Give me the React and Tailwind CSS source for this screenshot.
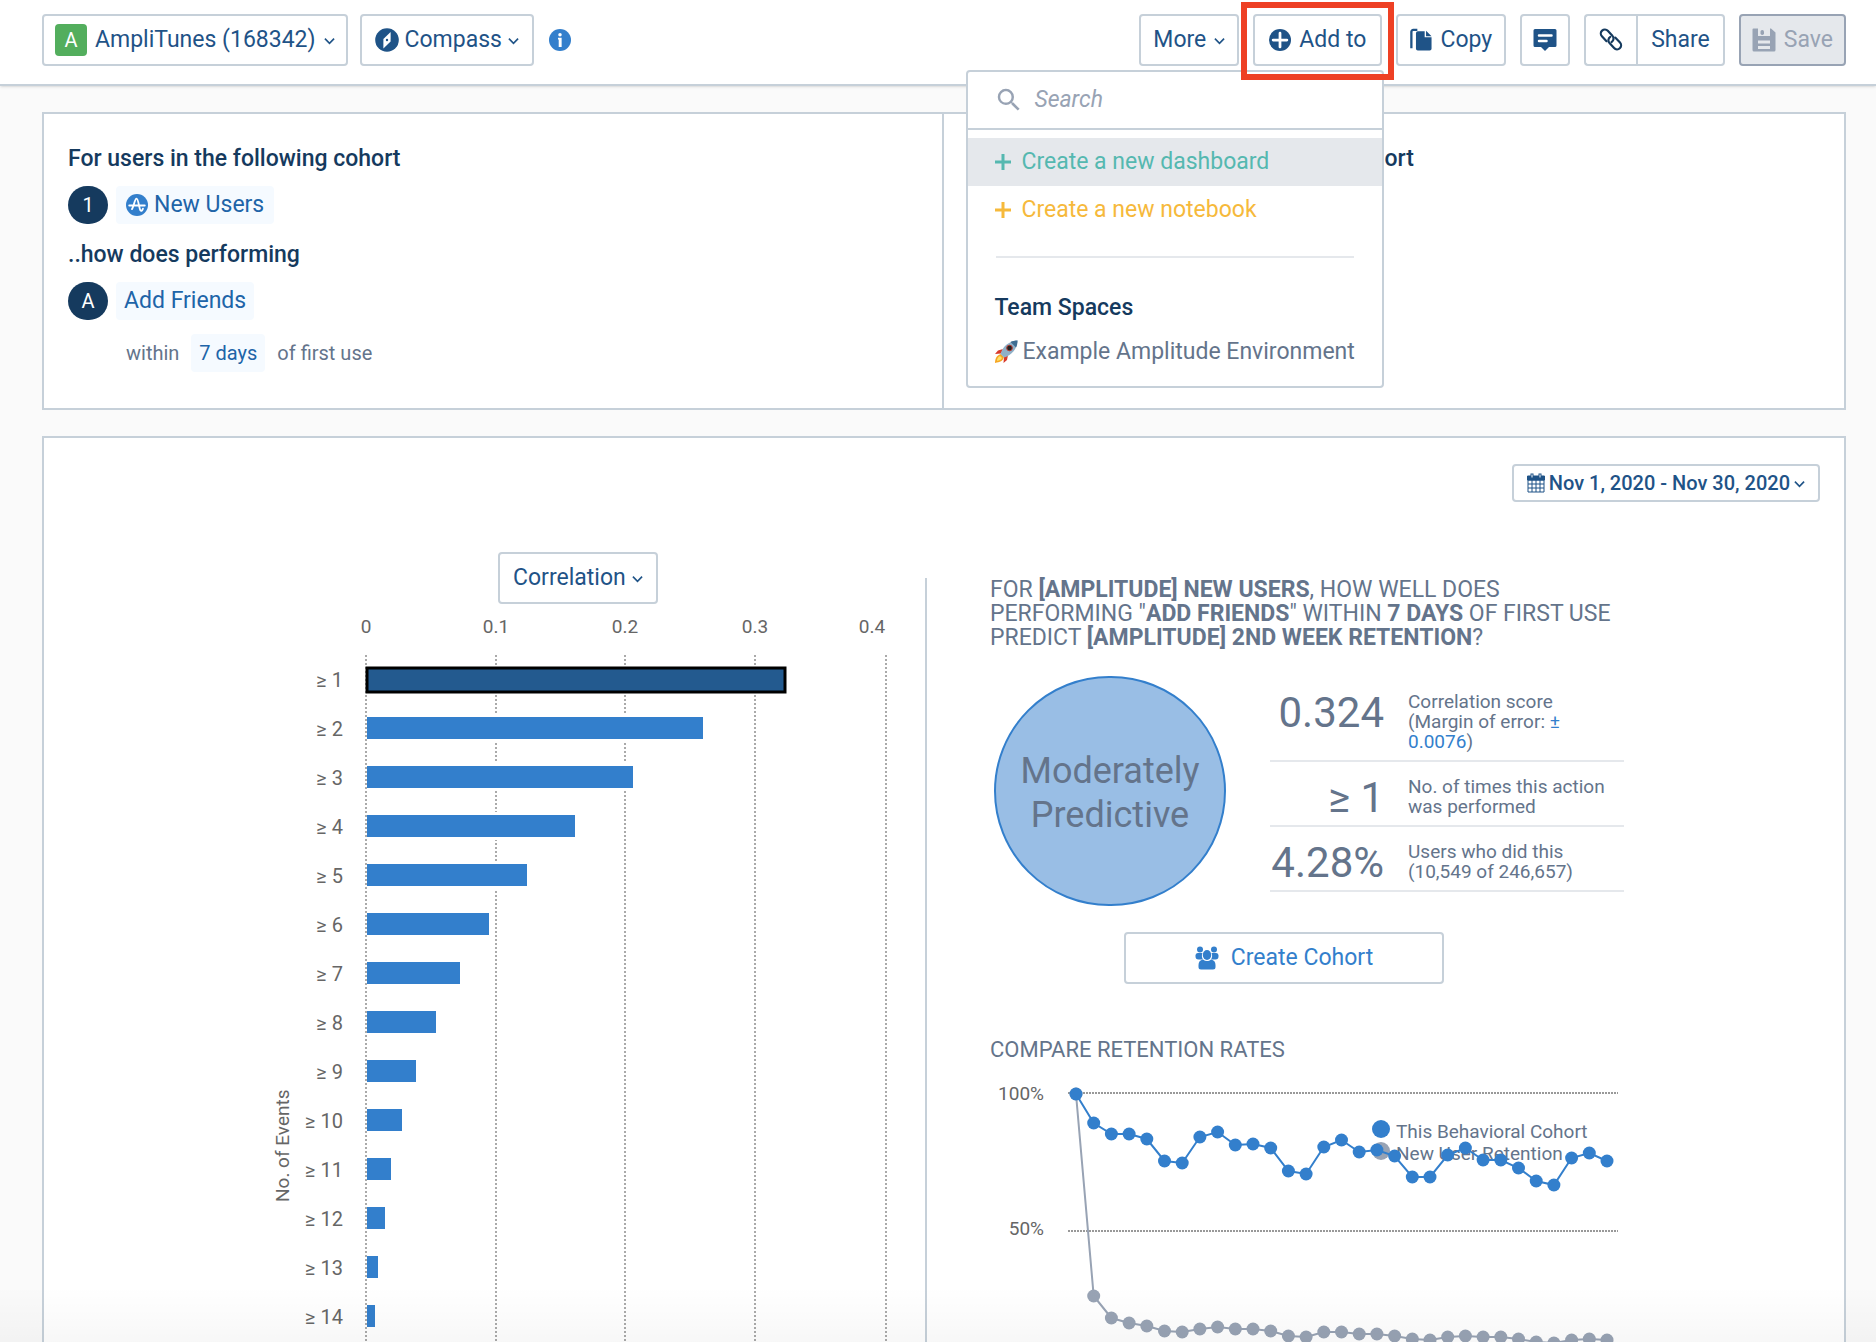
import { MdSearch } from "react-icons/md";

const bars = [418, 336, 266, 208, 160, 122, 93, 69, 49, 35, 24, 18, 11, 8];
const ticks = [
  { label: '0', line: 11, text: 11 },
  { label: '0.1', line: 141, text: 141 },
  { label: '0.2', line: 270, text: 270 },
  { label: '0.3', line: 400, text: 400 },
  { label: '0.4', line: 531, text: 517 },
];

// y positions of each day, x is the same for both series
const cohort = [14, 43, 54, 54, 59, 81, 83, 57, 52, 65, 64, 68, 91, 94, 67, 60, 72, 70, 76, 97, 97, 75, 68, 80, 80, 88, 101, 105, 78, 73, 81];
const newUsers = [14, 216, 238, 243, 246, 251, 252, 249, 247, 249, 249, 251, 256, 257, 252, 252, 254, 254, 256, 259, 260, 257, 256, 257, 257, 259, 262, 263, 260, 259, 260];
const dayX = (i) => 86 + i * 17.7;

const Chevron = () => (
  <svg viewBox="0 0 12 8" className="w-[11px] h-2 mt-0.5 shrink-0" fill="none" stroke="currentColor" strokeWidth="1.8">
    <path d="M1 1.5 6 6.500l5-5" />
  </svg>
);

const CompassIcon = () => (
  <svg viewBox="0 0 24 24" className="w-6 h-6">
    <circle cx="12" cy="12" r="11.8" fill="currentColor" />
    <path d="M15.600 4v9.500L8.400 20.500V11z" fill="#fff" />
    <circle cx="12" cy="12" r="1.2" fill="currentColor" />
  </svg>
);

const InfoIcon = () => (
  <svg viewBox="0 0 24 24" className="w-[22px] h-[22px] text-[#337fcc]">
    <circle cx="12" cy="12" r="12" fill="currentColor" />
    <circle cx="12" cy="6.2" r="1.9" fill="#fff" />
    <path d="M9.800 9.500h4V19.500h-3.200v-8h-.8z" fill="#fff" />
  </svg>
);

const AmplitudeIcon = () => (
  <svg viewBox="0 0 24 24" className="w-[22px] h-[22px]">
    <circle cx="12" cy="12" r="12" fill="#337fcc" />
    <path d="M3.5 12.5h17M6.5 16.5C8.5 14 9.5 5 11.5 5s2.800 11 4.300 13c1 1.200 2.200-.5 2.700-2" stroke="#fff" strokeWidth="2" fill="none" strokeLinecap="round" />
  </svg>
);

const AddIcon = () => (
  <svg viewBox="0 0 24 24" className="w-[22px] h-[22px]">
    <circle cx="12" cy="12" r="12" fill="currentColor" />
    <path d="M12 4.500v15M4.500 12h15" stroke="#fff" strokeWidth="3" strokeLinecap="round" />
  </svg>
);

const CopyIcon = () => (
  <svg viewBox="0 0 24 24" className="w-[22px] h-6" fill="currentColor">
    <path d="M8.500 2.500H16V9h7.500v12.500a2 2 0 0 1-2 2h-13a2 2 0 0 1-2-2v-17a2 2 0 0 1 2-2zM17.500 2l6 5.800h-6z" />
    <path d="M1.500 21V3a2 2 0 0 1 2-2H8" fill="none" stroke="currentColor" strokeWidth="2.500" />
  </svg>
);

const CommentIcon = () => (
  <svg viewBox="0 0 24 24" className="w-6 h-6">
    <path d="M2 1h20a1.500 1.500 0 0 1 1.500 1.500v15A1.500 1.500 0 0 1 22 19h-6l-4 4-4-4H2a1.500 1.500 0 0 1-1.500-1.500v-15A1.500 1.500 0 0 1 2 1z" fill="currentColor" />
    <path d="M6 7.500h12.500M6 13h7.500" stroke="#fff" strokeWidth="2.500" strokeLinecap="round" />
  </svg>
);

// two chain links lying on the same diagonal
const LinkIcon = () => (
  <svg viewBox="0 0 24 24" className="w-6 h-6" fill="none" stroke="currentColor" strokeWidth="2.200" strokeLinecap="round">
    <path d="M7.500 13.200 2.900 8.300A4 4 0 0 1 8.800 2.800l4.600 5a4 4 0 0 1-.8 6.200" />
    <path d="M16.200 9.600l4.800 5a4 4 0 0 1-5.900 5.500l-4.600-5a4 4 0 0 1 .8-6.200" />
  </svg>
);

const SaveIcon = () => (
  <svg viewBox="0 0 24 24" className="w-6 h-6">
    <path d="M1.500.5h17.500l4.500 4v17.500a1.500 1.500 0 0 1-1.500 1.500H2A1.500 1.500 0 0 1 .5 22V1.500a1 1 0 0 1 1-1z" fill="currentColor" />
    <path d="M6 0h12v8H6zM6 12.500h12v3H6zM6 18h12v3H6z" fill="#e5e8ec" />
    <rect x="8.500" y="2" width="3.500" height="5" rx="1.700" fill="currentColor" />
  </svg>
);

const CalendarIcon = () => (
  <svg viewBox="0 0 18 20" className="w-[18px] h-5" fill="none" stroke="currentColor">
    <path d="M1 7h16v12H1zM1 11h16M1 15h16M5 7v12M9 7v12M13 7v12" />
    <path d="M0.500 3h17v4h-17z" fill="currentColor" />
    <path d="M5 0.500v4M13 0.500v4" strokeWidth="3" />
    <path d="M5 1.500v3M13 1.500v3" stroke="#fff" />
  </svg>
);

const PlusIcon = () => (
  <svg viewBox="0 0 16 16" className="w-4 h-4 shrink-0" stroke="currentColor" strokeWidth="3">
    <path d="M8 0v16M0 8h16" />
  </svg>
);

const CohortIcon = () => (
  <svg viewBox="0 0 24 24" className="w-6 h-6" fill="currentColor">
    <circle cx="5" cy="3.500" r="3" />
    <circle cx="19" cy="3.500" r="3" />
    <path d="M3 7h4.500c-1 2-.8 4.500.5 6.500H3.500A3 3 0 0 1 .5 10.500V9A2.500 2.500 0 0 1 3 7zM21 7h-4.500c1 2 .8 4.500-.5 6.500h4.500a3 3 0 0 0 3-3V9A2.500 2.500 0 0 0 21 7z" />
    <ellipse cx="12" cy="9" rx="4.200" ry="5" />
    <path d="M8 13.500c2.500 2 5.500 2 8 0 3 .5 4.500 2.500 4.500 5.500v2a2.500 2.500 0 0 1-2.500 2.500H6A2.500 2.500 0 0 1 3.500 21v-2c0-3 1.500-5 4.500-5.500z" />
  </svg>
);

const RocketIcon = () => (
  <svg viewBox="0 0 24 24" className="w-6 h-6 shrink-0">
    <path d="M9 9 4 10.500 1 14l6-.5zM14 15l-1 5-3.500 3 .5-6z" fill="#d8392b" />
    <path d="M7 14c-4 1-6 4-6 9 5-1 8-2 9-6z" fill="#f6a623" />
    <path d="M6 16c-2 1-3 2.500-3 5 2.500-.5 4-1 5-3z" fill="#fde36a" />
    <path d="M23.500.5C15 1 9 6 6.500 14l3.500 3.500C18 15 23 9 23.500.5z" fill="#8fb0c8" />
    <path d="M23.500.5c-3 0-5 .5-7 1.500l5.500 5.500c1-2 1.500-4 1.500-7z" fill="#3f6d92" />
    <circle cx="15.500" cy="8" r="2.800" fill="#222" stroke="#b73a30" />
  </svg>
);

const buttonStyle = "flex items-center h-[52px] border-2 border-[#c6d0d9] rounded-sm bg-white text-[#1f5387]";

const AddToMenu = () => (
  <div className="absolute right-[-2px] top-14 z-10 w-[418px] h-[318px] bg-white border-2 border-[#c6d0d9] rounded-sm">
    <label className="flex items-center gap-2.5 h-[58px] px-[26px] border-b-2 border-[#c6d0d9] text-[#98a3b4]">
      <MdSearch className="w-[30px] h-[30px] shrink-0" />
      <input type="text" aria-label="Search" placeholder="Search" className="w-full italic outline-none placeholder:text-[#98a3b4]" />
    </label>
    <div className="pt-2">
      <button className="flex items-center gap-2.5 w-full h-12 px-[27px] bg-[#e5e8ec] text-[#55b8b0]"><PlusIcon />Create a new dashboard</button>
      <button className="flex items-center gap-2.5 w-full h-12 px-[27px] text-[#f6b93b]"><PlusIcon />Create a new notebook</button>
    </div>
    <hr className="mt-[22px] mx-7 border-t-2 border-[#e5e8ec]" />
    <h3 className="mt-9 px-[26px] leading-7 font-medium text-[#153a5e]">Team Spaces</h3>
    <a href="#example" className="flex items-center gap-1 mt-4 px-[26px] leading-7 text-[#64748b] whitespace-nowrap">
      <RocketIcon />Example Amplitude Environment
    </a>
  </div>
);

const Header = () => (
  <header className="flex items-center justify-between h-[86px] pb-1 pl-[42px] pr-[30px] bg-white border-b-2 border-[#c6d0d9] shadow-sm">
    <div className="flex items-center gap-3">
      <button className={`${buttonStyle} gap-2 px-[11px]`}>
        <span className="flex items-center justify-center w-8 h-8 rounded-sm bg-[#53ae5d] text-white text-[20px]">A</span>
        AmpliTunes (168342)
        <Chevron />
      </button>
      <button className={`${buttonStyle} gap-1.5 px-[13px]`}>
        <CompassIcon />
        Compass
        <Chevron />
      </button>
      <button aria-label="Chart info" className="ml-[3px]"><InfoIcon /></button>
    </div>
    <div className="flex items-center gap-[14px]">
      <button className={`${buttonStyle} gap-2 px-3`}>More <Chevron /></button>
      <div className="relative">
        <button className={`${buttonStyle} gap-2 px-[14px]`}><AddIcon />Add to</button>
        <AddToMenu />
        <div className="absolute -inset-x-3 -top-3 -bottom-[14px] z-20 border-[6px] border-[#ee4024] pointer-events-none" />
      </div>
      <button className={`${buttonStyle} gap-2 px-3`}><CopyIcon />Copy</button>
      <button aria-label="Comments" className={`${buttonStyle} px-[11px]`}><CommentIcon /></button>
      <div className="flex">
        <button aria-label="Copy link" className="flex items-center h-[52px] px-[13px] border-2 border-r-0 border-[#c6d0d9] rounded-l-sm text-[#153a5e]"><LinkIcon /></button>
        <button className="h-[52px] px-[13px] border-2 border-[#c6d0d9] rounded-r-sm text-[#1f5387]">Share</button>
      </div>
      <button disabled className="flex items-center gap-2 h-[52px] px-[11px] border-2 border-[#98a3b4] rounded-sm bg-[#e5e8ec] text-[#98a3b4]"><SaveIcon />Save</button>
    </div>
  </header>
);

const Badge = ({ children }) => (
  <span className="flex items-center justify-center w-10 h-[38px] rounded-full bg-[#153a5e] text-white text-[20px]">{children}</span>
);

const Definition = () => (
  <section className="grid grid-cols-2 h-[298px] border-2 border-[#c6d0d9] bg-white">
    <div className="px-6 pt-[31px] border-r-2 border-[#c6d0d9]">
      <h2 className="leading-7 font-medium text-[#153a5e]">For users in the following cohort</h2>
      <div className="flex gap-2 mt-[13px]">
        <Badge>1</Badge>
        <button className="flex items-center gap-1.5 h-[38px] px-[10px] rounded-sm bg-[#f5faff] text-[#2064a8]"><AmplitudeIcon />New Users</button>
      </div>
      <h2 className="mt-[17px] leading-7 font-medium text-[#153a5e]">..how does performing</h2>
      <div className="flex gap-2 mt-[13px]">
        <Badge>A</Badge>
        <button className="h-[38px] px-2 rounded-sm bg-[#f5faff] text-[#2064a8]">Add Friends</button>
      </div>
      <div className="flex items-baseline gap-3 mt-[14px] pl-[58px] text-[20px] text-[#64748b]">
        within
        <button className="h-[38px] px-2 rounded-sm bg-[#f5faff] text-[#2064a8]">7 days</button>
        of first use
      </div>
    </div>
    <div className="px-6 pt-[31px]">
      <h2 className="leading-7 font-medium text-[#153a5e]">..predict users being in the following cohort</h2>
    </div>
  </section>
);

const CorrelationChart = () => (
  <svg width="560" height="750" viewBox="0 0 560 750" className="shrink-0" fontSize="19" fill="#666">
    {ticks.map((t) => (
      <g key={t.label}>
        <text x={t.text} y="29" textAnchor="middle">{t.label}</text>
        <line x1={t.line} x2={t.line} y1="51" y2="750" stroke="#aaa" strokeWidth="2" strokeDasharray="2 2" />
      </g>
    ))}
    {bars.map((w, i) => (
      i === 0
        ? <rect key={i} x="12" y="64" width={w} height="24" fill="#235a8f" stroke="#000" strokeWidth="3" />
        : (
          <g key={i}>
            <rect x="12" y={61 + i * 49} width={w + 2} height="28" fill="#fff" />
            <rect x="12" y={64 + i * 49} width={w} height="22" fill="#337fcc" />
          </g>
        )
    ))}
  </svg>
);

const EventLabels = () => (
  <div className="flex w-[78px] mr-3 text-[#666] whitespace-nowrap">
    <div className="mt-[484px] mr-auto h-[114px] text-[19px] leading-9 [writing-mode:vertical-rl] rotate-180">No. of Events</div>
    <ul className="mt-[52px] text-right text-[20px]">
      {bars.map((_, i) => <li key={i} className="h-[49px] leading-[49px]">≥ {i + 1}</li>)}
    </ul>
  </div>
);

const points = (ys) => ys.map((y, i) => `${dayX(i)},${y}`).join(' ');

const RetentionChart = () => (
  <svg width="640" height="300" viewBox="0 0 640 300" className="mt-[18px]" fontSize="19" fill="#64748b">
    <text x="54" y="20" textAnchor="end" fill="#666">100%</text>
    <text x="54" y="155" textAnchor="end" fill="#666">50%</text>
    <path d="M78 13h550M78 151h550" stroke="#999" strokeWidth="2" strokeDasharray="2 1" />
    <circle cx="391" cy="49" r="9" fill="#337fcc" />
    <circle cx="391" cy="71" r="9" fill="#98a3b4" />
    <text x="406" y="58">This Behavioral Cohort</text>
    <text x="406" y="80">New User Retention</text>
    <polyline points={points(newUsers)} fill="none" stroke="#98a3b4" strokeWidth="2" />
    {newUsers.map((y, i) => <circle key={i} cx={dayX(i)} cy={y} r="6.5" fill="#98a3b4" />)}
    <polyline points={points(cohort)} fill="none" stroke="#337fcc" strokeWidth="2" />
    {cohort.map((y, i) => <circle key={i} cx={dayX(i)} cy={y} r="6.5" fill="#337fcc" />)}
  </svg>
);

const Stat = ({ value, children }) => (
  <div className="grid grid-cols-[114px_1fr] gap-6 pb-2 border-b-2 border-[#e5e8ec]">
    <div className="text-right text-[42px] leading-[42px] h-10 whitespace-nowrap">{value}</div>
    <p className="text-[19px] leading-5">{children}</p>
  </div>
);

const Summary = () => (
  <div className="pl-[63px] text-[#64748b]">
    <h2 className="leading-6 uppercase whitespace-nowrap">
      For <b>[Amplitude] New Users</b>, how well does<br />
      performing "<b>Add Friends</b>" within <b>7 days</b> of first use<br />
      predict <b>[Amplitude] 2nd Week Retention</b>?
    </h2>
    <div className="flex mt-[26px] pl-1">
      <div className="flex items-center justify-center w-[232px] h-[230px] pt-1 shrink-0 border-2 border-[#337fcc] rounded-full bg-[#99bee5] text-center text-[36px] leading-[44px]">
        Moderately<br />Predictive
      </div>
      <div className="flex flex-col gap-[15px] ml-11 mt-4 w-[354px]">
        <Stat value="0.324">Correlation score<br />(Margin of error: <span className="text-[#337fcc]">±<br />0.0076</span>)</Stat>
        <Stat value="≥ 1">No. of times this action was performed</Stat>
        <Stat value="4.28%">Users who did this<br />(10,549 of 246,657)</Stat>
      </div>
    </div>
    <button className="flex items-center justify-center gap-3 w-80 h-[52px] mt-[26px] ml-[134px] border-2 border-[#c6d0d9] rounded-sm text-[#337fcc]">
      <CohortIcon />Create Cohort
    </button>
    <h2 className="mt-[54px] text-[22px] leading-6 uppercase">Compare Retention Rates</h2>
    <RetentionChart />
  </div>
);

const Results = () => (
  <section className="mt-[26px] border-2 border-[#c6d0d9] bg-white">
    <div className="flex justify-end pt-[26px] pr-6">
      <button className="flex items-center gap-1 h-[38px] px-[13px] border-2 border-[#c6d0d9] rounded-sm text-[20px] font-medium text-[#1f5387]">
        <CalendarIcon />Nov 1, 2020 - Nov 30, 2020<Chevron />
      </button>
    </div>
    <div className="grid grid-cols-[660px_1fr] max-w-[1358px] mx-auto mt-[50px]">
      <div>
        <button className={`${buttonStyle} gap-1.5 px-[13px] ml-[233px]`}>Correlation <Chevron /></button>
        <div className="flex">
          <EventLabels />
          <CorrelationChart />
        </div>
      </div>
      <div className="mt-[26px] border-l-2 border-[#c6d0d9]">
        <Summary />
      </div>
    </div>
  </section>
);

export default function App() {
  return (
    <div className="relative h-screen overflow-hidden bg-[#fafafa] font-['Roboto',sans-serif] text-[23px]">
      <Header />
      <main className="pt-[26px] pl-[42px] pr-[30px]">
        <Definition />
        <Results />
      </main>
      <div className="absolute inset-x-0 bottom-0 h-14 bg-linear-to-b from-transparent to-black/3 pointer-events-none" />
    </div>
  );
}
